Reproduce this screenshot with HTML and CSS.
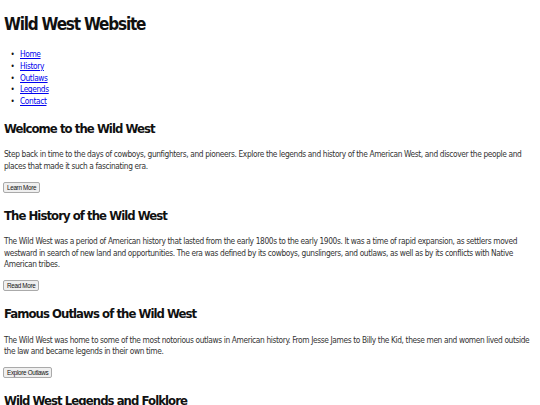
FILE: index.html
```html
<!DOCTYPE html>
<html lang="en">
<head>
<meta charset="utf-8">
<title>Wild West Website</title>
<link rel="stylesheet" href="styles.css">
</head>
<body>
<header class="site-header">
  <h1 class="site-title">Wild West Website</h1>
  <nav>
    <ul class="nav-list">
      <li><a href="#">Home</a></li>
      <li><a href="#">History</a></li>
      <li><a href="#">Outlaws</a></li>
      <li><a href="#">Legends</a></li>
      <li><a href="#">Contact</a></li>
    </ul>
  </nav>
</header>
<main>
  <section class="section">
    <h2 class="section-title">Welcome to the Wild West</h2>
    <p class="section-text">Step back in time to the days of cowboys, gunfighters, and pioneers. Explore the legends and history of the American West, and discover the people and places that made it such a fascinating era.</p>
    <button class="btn">Learn More</button>
  </section>
  <section class="section">
    <h2 class="section-title">The History of the Wild West</h2>
    <p class="section-text">The Wild West was a period of American history that lasted from the early 1800s to the early 1900s. It was a time of rapid expansion, as settlers moved westward in search of new land and opportunities. The era was defined by its cowboys, gunslingers, and outlaws, as well as by its conflicts with Native American tribes.</p>
    <button class="btn">Read More</button>
  </section>
  <section class="section">
    <h2 class="section-title">Famous Outlaws of the Wild West</h2>
    <p class="section-text">The Wild West was home to some of the most notorious outlaws in American history. From Jesse James to Billy the Kid, these men and women lived outside the law and became legends in their own time.</p>
    <button class="btn">Explore Outlaws</button>
  </section>
  <section class="section">
    <h2 class="section-title">Wild West Legends and Folklore</h2>
    <p class="section-text">The Wild West is full of legends and folklore, from tall tales of cowboys and outlaws to stories of lost gold mines and ghost towns.</p>
    <button class="btn">Discover Legends</button>
  </section>
</main>
</body>
</html>
```

FILE: styles.css
```css
html, body {
  margin: 0;
  padding: 0;
  background: #ffffff;
}

body {
  padding: 0 4px;
  font-family: "DejaVu Sans Condensed", "DejaVu Sans", sans-serif;
  font-stretch: condensed;
  font-size: 8.3px;
  line-height: 11.5px;
  letter-spacing: -0.37px;
  color: #333333;
}

.site-title {
  margin: 13.5px 0 0;
  font-size: 17px;
  line-height: 20px;
  font-weight: bold;
  letter-spacing: -1.2px;
  color: #111111;
}

.nav-list {
  margin: 15.5px 0 0;
  padding: 0 0 0 16px;
  list-style: disc;
  line-height: 11.8px;
  color: #111111;
}

.nav-list li::marker {
  content: "\2022\00a0\00a0\00a0";
  font-size: 8px;
}

.nav-list a {
  color: #0000ee;
  text-decoration: underline;
}

.section-title {
  margin: 13px 0 0;
  font-size: 13px;
  line-height: 15px;
  font-weight: bold;
  letter-spacing: -0.95px;
  color: #111111;
}

.section + .section .section-title {
  margin-top: 15px;
}

.section-text {
  margin: 13.5px 0 0;
}

.btn {
  display: block;
  margin: 9.5px 0 0 -1px;
  padding: 1px 3px;
  font-family: "Liberation Sans", Arial, sans-serif;
  font-stretch: normal;
  font-size: 6.3px;
  line-height: 7px;
  letter-spacing: -0.3px;
  color: #111111;
  background: #efefef;
  border: 1px solid #aaaaaa;
  border-radius: 2px;
}
```
